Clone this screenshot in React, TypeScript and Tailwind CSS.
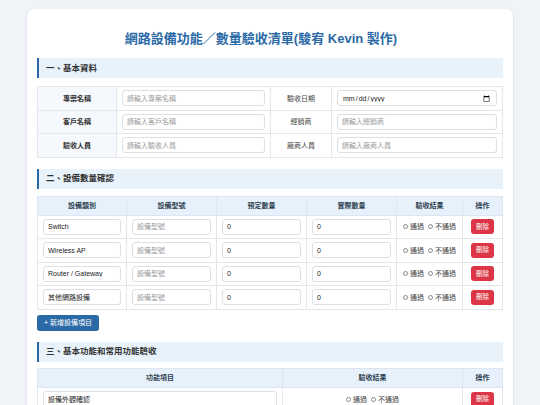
import React from 'react';

const font = { fontFamily: '"Liberation Sans", "Noto Sans CJK TC", sans-serif' };

const SectionTitle = ({ children }: { children: React.ReactNode }) => (
  <div className="flex h-[20px] items-center border-l-[2px] border-[#2b6aa6] bg-[#e8f2fb] pl-[7px] text-[8.5px] font-bold text-[#333]">
    {children}
  </div>
);

const Field = ({ placeholder, value }: { placeholder?: string; value?: string }) => (
  <input
    className="block h-[16px] w-full rounded-[3px] border border-[#dcdfe4] bg-white px-[4px] text-[7px] text-[#222] outline-none placeholder:text-[#9a9a9a]"
    placeholder={placeholder}
    defaultValue={value}
  />
);

const Radio = ({ label }: { label: string }) => (
  <span className="inline-flex items-center gap-[2px]">
    <span className="inline-block h-[5px] w-[5px] rounded-full border border-[#888]" />
    <span>{label}</span>
  </span>
);

const Result = () => (
  <div className="flex items-center justify-center gap-[4px] text-[7px] text-[#444]">
    <Radio label="通過" />
    <Radio label="不通過" />
  </div>
);

const DeleteBtn = () => (
  <button className="mx-auto block h-[15px] w-[23px] rounded-[3px] bg-[#dc3545] text-[6.5px] leading-none text-white">刪除</button>
);

const devices = ['Switch', 'Wireless AP', 'Router / Gateway', '其他網路設備'];

export default function App() {
  const cell = 'border border-[#e3e6ea] px-[5px] py-0';
  const head = 'border border-[#dce6f0] bg-[#e7f1fb] text-[7px] font-bold text-[#2c3e50]';

  return (
    <div className="min-h-[405px] bg-[#f0f4f8] px-[27px] pt-[9px]" style={font}>
      <div className="h-[396px] overflow-hidden rounded-t-[7px] bg-white px-[10px] pt-[21px] shadow-sm">
        <h1 className="pr-[18px] text-center text-[13px] leading-[17px] font-bold text-[#2b6aa6]">
          網路設備功能／數量驗收清單(駿宥 Kevin 製作)
        </h1>

        <div className="mt-[11px]">
          <SectionTitle>一、基本資料</SectionTitle>
        </div>
        <table className="mt-[8px] w-full table-fixed border-collapse text-[7px] leading-none">
          <colgroup>
            <col className="w-[79px]" />
            <col className="w-[154px]" />
            <col className="w-[61px]" />
            <col />
          </colgroup>
          <tbody>
            {[
              ['專案名稱', '請輸入專案名稱', '驗收日期', null],
              ['客戶名稱', '請輸入客戶名稱', '經銷商', '請輸入經銷商'],
              ['驗收人員', '請輸入驗收人員', '廠商人員', '請輸入廠商人員'],
            ].map(([a, pa, b, pb]) => (
              <tr key={a as string} className="h-[23.5px]">
                <td className={`${cell} bg-[#f5f8fc] text-center font-bold text-[#333]`}>{a}</td>
                <td className={cell}>
                  <Field placeholder={pa as string} />
                </td>
                <td className={`${cell} text-center text-[#444]`}>{b}</td>
                <td className={cell}>
                  {pb === null ? (
                    <input
                      type="date"
                      className="block h-[16px] w-full rounded-[3px] border border-[#dcdfe4] px-[4px] text-[7px] text-[#222] outline-none"
                    />
                  ) : (
                    <Field placeholder={pb as string} />
                  )}
                </td>
              </tr>
            ))}
          </tbody>
        </table>

        <div className="mt-[11px]">
          <SectionTitle>二、設備數量確認</SectionTitle>
        </div>
        <table className="mt-[7px] w-full table-fixed border-collapse text-[7px] leading-none">
          <colgroup>
            <col className="w-[89px]" />
            <col className="w-[90px]" />
            <col className="w-[90px]" />
            <col className="w-[90px]" />
            <col className="w-[66px]" />
            <col />
          </colgroup>
          <thead>
            <tr className="h-[19px]">
              {['設備類別', '設備型號', '預定數量', '實際數量', '驗收結果', '操作'].map((h) => (
                <th key={h} className={head}>
                  {h}
                </th>
              ))}
            </tr>
          </thead>
          <tbody>
            {devices.map((d) => (
              <tr key={d} className="h-[23.5px]">
                <td className={`${cell} px-[4px]`}>
                  <Field value={d} />
                </td>
                <td className={`${cell} px-[4px]`}>
                  <Field placeholder="設備型號" />
                </td>
                <td className={`${cell} px-[4px]`}>
                  <Field value="0" />
                </td>
                <td className={`${cell} px-[4px]`}>
                  <Field value="0" />
                </td>
                <td className={cell}>
                  <Result />
                </td>
                <td className={cell}>
                  <DeleteBtn />
                </td>
              </tr>
            ))}
          </tbody>
        </table>

        <button className="mt-[5px] flex h-[16px] items-center rounded-[3px] bg-[#2b6aa6] px-[7px] text-[7px] leading-none text-white">
          + 新增設備項目
        </button>

        <div className="mt-[11px]">
          <SectionTitle>三、基本功能和常用功能驗收</SectionTitle>
        </div>
        <table className="mt-[6px] w-full table-fixed border-collapse text-[7px] leading-none">
          <colgroup>
            <col className="w-[245px]" />
            <col className="w-[180px]" />
            <col />
          </colgroup>
          <thead>
            <tr className="h-[19px]">
              {['功能項目', '驗收結果', '操作'].map((h) => (
                <th key={h} className={head}>
                  {h}
                </th>
              ))}
            </tr>
          </thead>
          <tbody>
            <tr className="h-[24px]">
              <td className={`${cell} px-0`}>
                <Field value="設備外觀確認" />
              </td>
              <td className={cell}>
                <Result />
              </td>
              <td className={cell}>
                <DeleteBtn />
              </td>
            </tr>
          </tbody>
        </table>
      </div>
    </div>
  );
}
